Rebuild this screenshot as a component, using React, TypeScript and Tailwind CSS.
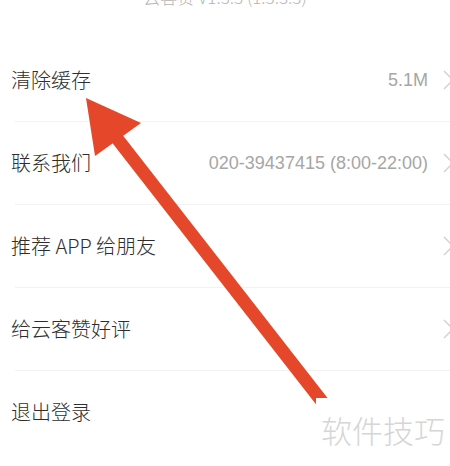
import React from 'react';

const rows = [
  { label: '清除缓存', value: '5.1M' },
  { label: '联系我们', value: '020-39437415 (8:00-22:00)' },
  { label: '推荐 APP 给朋友', value: '' },
  { label: '给云客赞好评', value: '' },
  { label: '退出登录', value: '', noArrow: true, noLine: true },
];

const Chevron = () => (
  <svg width="14" height="22" viewBox="0 0 14 22" className="ml-[14px] mr-[-6px] shrink-0">
    <polyline points="2,2 11,11 2,20" fill="none" stroke="#d2d2d2" strokeWidth="1.5" />
  </svg>
);

export default function App() {
  return (
    <div
      className="relative w-[450px] h-[466px] overflow-hidden bg-white"
      style={{ fontFamily: '"Noto Sans CJK SC", "Noto Sans", sans-serif' }}
    >
      <div className="h-[39px] flex justify-center">
        <p className="mt-[-13px] text-[17px] leading-[20px] font-light text-[#b4b4b4]">云客赞 V1.3.3 (1.3.3.3)</p>
      </div>

      {rows.map((r, idx) => (
        <div key={idx}>
          <div className="h-[82px] flex items-center pl-[11px]">
            <span className="text-[20px] font-light text-[#2e2e2e]">{r.label}</span>
            <span className="flex-1" />
            {r.value && (
              <span className="text-[18px] text-[#a6a6a6] font-['Liberation_Sans',sans-serif]">{r.value}</span>
            )}
            {!r.noArrow && <Chevron />}
          </div>
          {!r.noLine && <div className="h-px ml-[15px] bg-[#f2f2f2]" />}
        </div>
      ))}

      {/* annotation arrow drawn over the screenshot */}
      <svg className="absolute inset-0" width="450" height="466" viewBox="0 0 450 466">
        <line x1="112" y1="132" x2="324" y2="404" stroke="#e4472a" strokeWidth="13" />
        <polygon points="86,98 141,123 95,156" fill="#e4472a" />
      </svg>

      <div className="absolute left-[316px] top-[398px] right-0 bottom-0 bg-white flex items-start justify-center pt-[12px]">
        <span className="text-[31px] leading-[40px] font-light text-[#d6d6d6]">软件技巧</span>
      </div>
    </div>
  );
}
